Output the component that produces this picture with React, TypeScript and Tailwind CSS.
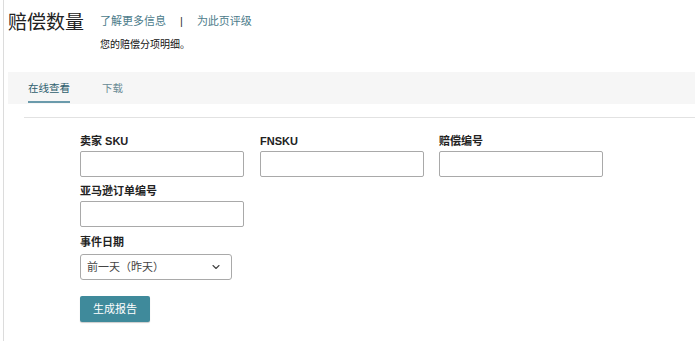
import { ChevronDown } from 'lucide-react';

const font = { fontFamily: '"Liberation Sans", "Noto Sans CJK SC", sans-serif' };

function Field({ label, className = '' }: { label: string; className?: string }) {
  return (
    <div className={`flex flex-col ${className}`}>
      <label className="text-[11px] font-bold text-[#222] leading-[14px] h-[14px] mb-[3px]">{label}</label>
      <input className="w-[164px] h-[26px] border border-[#a9a9a9] rounded-[2px] bg-white outline-none" />
    </div>
  );
}

export default function App() {
  return (
    <div className="w-[695px] h-[341px] bg-white overflow-hidden flex" style={font}>
      <div className="w-[3px] shrink-0" />
      <div className="w-px shrink-0 bg-[#dcdcdc]" />
      <div className="flex-1 flex flex-col">
        {/* Header */}
        <div className="flex items-start pl-[4px] pt-[10px] h-[72px] shrink-0">
          <h1 className="text-[19px] leading-[26px] text-[#222] font-normal">赔偿数量</h1>
          <div className="ml-[16px] pt-[4px] flex flex-col">
            <div className="flex items-center text-[11px] leading-[14px] text-[#4b7b8a]">
              <span>了解更多信息</span>
              <span className="mx-[14px] text-[#333]">|</span>
              <span>为此页评级</span>
            </div>
            <p className="text-[10px] leading-[13px] text-[#111] mt-[10px]">您的赔偿分项明细。</p>
          </div>
        </div>

        {/* Tabs */}
        <div className="ml-[4px] h-[32px] shrink-0 bg-[#f6f6f6] flex items-stretch pl-[20px]">
          <div className="flex flex-col justify-center relative text-[10.5px] text-[#2f5f6e] pt-[1px]">
            在线查看
            <div className="absolute left-0 right-0 bottom-[1px] h-[2px] bg-[#6a9aab]" />
          </div>
          <div className="flex flex-col justify-center text-[10.5px] text-[#6a8a94] ml-[32px] pt-[1px]">下载</div>
        </div>
        <div className="ml-[20px] mt-[13px] h-px shrink-0 bg-[#e2e2e2]" />

        {/* Form */}
        <div className="pl-[76px] pt-[16px] flex flex-col">
          <div className="flex gap-[16px]">
            <Field label="卖家 SKU" />
            <Field label="FNSKU" />
            <Field label="赔偿编号" className="ml-[-1px]" />
          </div>
          <Field label="亚马逊订单编号" className="mt-[7px]" />
          <div className="flex flex-col mt-[8px]">
            <label className="text-[11px] font-bold text-[#222] leading-[14px] mb-[5px]">事件日期</label>
            <div className="w-[152px] h-[26px] border border-[#a9a9a9] rounded-[3px] bg-white flex items-center justify-between pl-[6px] pr-[9px] text-[11px] text-[#444]">
              <span>前一天（昨天）</span>
              <ChevronDown className="w-[12px] h-[12px] text-[#444]" strokeWidth={2.25} />
            </div>
          </div>
          <button className="mt-[16px] w-[70px] h-[26px] bg-[#3f8a9b] text-white text-[11px] rounded-[2px] shadow-[0_1px_1px_rgba(0,0,0,0.2)]">
            生成报告
          </button>
        </div>
      </div>
    </div>
  );
}
